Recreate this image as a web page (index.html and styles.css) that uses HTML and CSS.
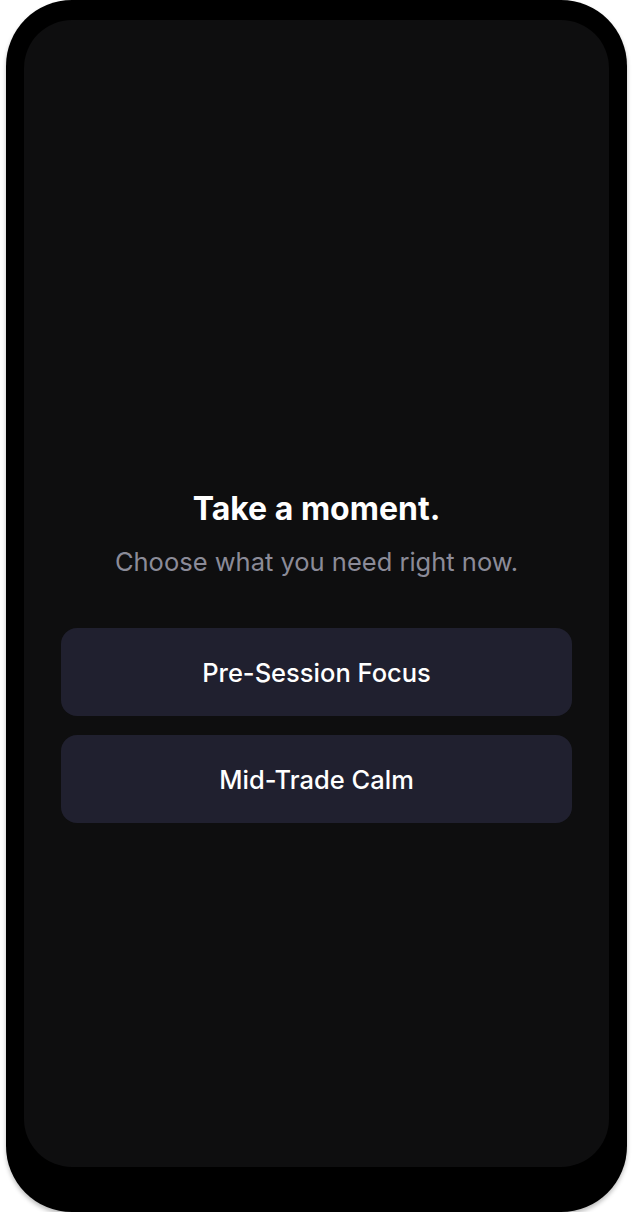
FILE: index.html
```html
<!DOCTYPE html>
<html>
<head>
	<meta charset="UTF-8">
	<meta name="viewport" content="width=device-width, initial-scale=1">
	<title>Take a moment</title>
	<link rel="stylesheet" href="styles.css">
</head>
<body>
	<div class="phone">
		<div class="screen">
			<div class="intro">
				<h1 class="title">Take a moment.</h1>
				<p class="subtitle">Choose what you need right now.</p>
			</div>
			<div class="choices">
				<button class="choice">Pre-Session Focus</button>
				<button class="choice">Mid-Trade Calm</button>
			</div>
		</div>
	</div>
</body>
</html>
```

FILE: styles.css
```css
:root {
	--col-screen: #0e0e0f;
	--col-card: #20202f;
	--col-text: #ffffff;
	--col-muted: #8b8b98;
}
body {
	margin: 0;
	padding: 0;
	background: #ffffff;
	font-family: Inter, 'Noto Sans', sans-serif;
}
.phone {
	width: 621px;
	height: 1212px;
	box-sizing: border-box;
	margin: 0 auto;
	padding: 20px 18px 45px 18px;
	background: #000000;
	border-radius: 66px;
	box-shadow: 0 3px 4px rgba(0, 0, 0, 0.25);
}
.screen {
	height: 100%;
	box-sizing: border-box;
	background: var(--col-screen);
	border-radius: 48px;
	padding: 469px 37px 0 37px;
	display: flex;
	flex-direction: column;
}
.intro {
	text-align: center;
}
.title {
	margin: 0;
	font-size: 32px;
	font-weight: 700;
	line-height: 40px;
	color: var(--col-text);
}
.subtitle {
	margin: 17px 0 0 0;
	font-size: 25.5px;
	line-height: 32px;
	color: var(--col-muted);
}
.choices {
	margin-top: 50px;
	display: flex;
	flex-direction: column;
	gap: 19px;
}
.choice {
	height: 88px;
	border: none;
	border-radius: 16px;
	background: var(--col-card);
	color: var(--col-text);
	font-family: inherit;
	font-size: 25.5px;
	font-weight: 500;
	padding: 0;
}
```
